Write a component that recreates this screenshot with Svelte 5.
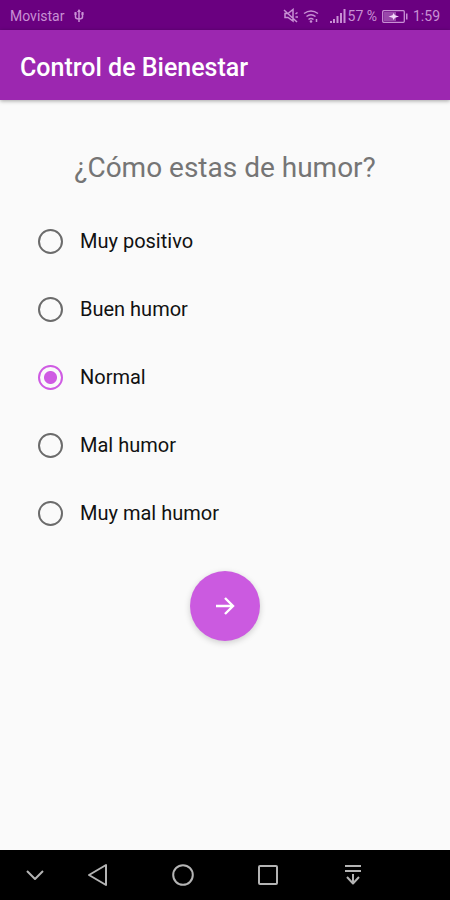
<script>
  const opciones = [
    { id: 'muy-positivo', texto: 'Muy positivo' },
    { id: 'buen-humor', texto: 'Buen humor' },
    { id: 'normal', texto: 'Normal' },
    { id: 'mal-humor', texto: 'Mal humor' },
    { id: 'muy-mal-humor', texto: 'Muy mal humor' },
  ];

  let humor = $state('normal');
</script>

<div class="screen">
  <div class="status">
    <span>Movistar</span>
    <svg class="usb" width="10" height="14" viewBox="0 0 10 14" fill="none" stroke="currentColor">
      <path d="M5 1v12M1.5 4v4q0 2 3.500 2M8.500 4v4q0 2-3.500 2" stroke-width="1.5" />
      <path d="M5 0l2 3H3zM0.500 3h2v3h-2zM7.500 3h2v3h-2z" fill="currentColor" stroke="none" />
    </svg>
    <svg class="mute" width="16" height="16" viewBox="0 0 16 16" fill="none" stroke="currentColor" stroke-width="1.5">
      <path d="M2 5.5h3l5-4v11.500l-5-3.500H2zM1 2l13 12M12.500 6l2-1.500M12.500 9h2.500" />
    </svg>
    <svg class="wifi" width="16" height="16" viewBox="0 0 16 16" fill="none" stroke="currentColor" stroke-width="1.5">
      <path d="M1 5.500q7-5 14 0M3.500 8.500q4.500-3.500 9 0M5.500 11.500q2.500-2 5 0" />
      <circle cx="8" cy="13.5" r="1.3" fill="currentColor" stroke="none" />
      <path d="M13.500 11v3" />
    </svg>
    <svg width="16" height="14" viewBox="0 0 16 14" fill="currentColor">
      <path d="M0 12h2v2H0zM3 10h2v4H3zM6.500 7h2v7h-2zM10 4h2v10h-2zM13.500 0h2v14h-2z" />
    </svg>
    <span class="percent">57 %</span>
    <svg class="battery" width="26" height="13" viewBox="0 0 26 13">
      <rect x="0.7" y="0.7" width="21.6" height="11.6" rx="1" fill="none" stroke="currentColor" stroke-width="1.3" />
      <path d="M2 2h12v9H2z" fill="currentColor" opacity="0.5" />
      <path d="M24 3.500h1.500v6H24z" fill="currentColor" />
      <path d="M6.500 6.500l4-1.200 1-2.300 1.500 2.300 4 1.200-4 1.200-1.500 2.300-1-2.300z" fill="#f3d9fa" />
    </svg>
    <span>1:59</span>
  </div>

  <header class="appbar">
    <h1>Control de Bienestar</h1>
  </header>

  <main>
    <h2 id="pregunta">¿Cómo estas de humor?</h2>

    <div class="options" role="radiogroup" aria-labelledby="pregunta">
      {#each opciones as o (o.id)}
        <label class="option">
          <input type="radio" name="humor" value={o.id} bind:group={humor} />
          <span>{o.texto}</span>
        </label>
      {/each}
    </div>

    <button class="next" type="button" aria-label="Siguiente">
      <svg width="20" height="20" viewBox="0 0 20 20" fill="none" stroke="currentColor" stroke-width="2.4">
        <path d="M1 10h17M10 2l8 8-8 8" />
      </svg>
    </button>
  </main>

  <nav class="navbar">
    <button type="button" aria-label="Ocultar">
      <svg width="24" height="24" viewBox="0 0 24 24"><path d="M4 8l8 8 8-8" /></svg>
    </button>
    <button type="button" aria-label="Atrás">
      <svg width="24" height="24" viewBox="0 0 24 24"><path d="M20 2v20L3 12z" /></svg>
    </button>
    <button type="button" aria-label="Inicio">
      <svg width="24" height="24" viewBox="0 0 24 24"><circle cx="12" cy="12" r="9.8" /></svg>
    </button>
    <button type="button" aria-label="Recientes">
      <svg width="24" height="24" viewBox="0 0 24 24"><rect x="3" y="3" width="18" height="18" rx="1" /></svg>
    </button>
    <button type="button" aria-label="Notificaciones">
      <svg width="24" height="24" viewBox="0 0 24 24"><path d="M4 3h16M4 8h16M12 11v10M6 14l6 6.500 6-6.500" /></svg>
    </button>
  </nav>
</div>

<style>
  :global(body) { margin: 0; background: #fafafa; }

  .screen {
    display: flex;
    flex-direction: column;
    min-height: 100vh;
    background: #fafafa;
    color: #111;
    font-family: Roboto, "Liberation Sans", sans-serif;
  }

  .status {
    display: flex;
    align-items: center;
    height: 30px;
    padding: 2px 10px 0;
    box-sizing: border-box;
    background: #6a0080;
    color: #c890d4;
    font-size: 14px;
  }
  .usb { margin-left: 10px; }
  .mute { margin-left: auto; }
  .wifi { margin: 0 11px 0 4px; }
  .percent { margin: 0 5px 0 2px; }
  .battery { margin-right: 5px; }

  .appbar {
    display: flex;
    align-items: center;
    height: 70px;
    padding: 4px 20px 0;
    box-sizing: border-box;
    background: #9c27b0;
    color: #fff;
    box-shadow: 0 1px 4px rgba(0, 0, 0, 0.35);
  }
  h1 { margin: 0; font-size: 25px; font-weight: 500; }

  main {
    flex: 1;
    display: flex;
    flex-direction: column;
    align-items: center;
    padding: 48px 38px 24px;
  }
  h2 { margin: 0 0 19px; font-size: 28px; line-height: 40px; font-weight: 400; color: #757575; text-align: center; }

  .options { align-self: stretch; }
  .option { display: flex; align-items: center; gap: 17px; height: 68px; font-size: 20px; cursor: pointer; }
  input {
    appearance: none;
    width: 25px;
    height: 25px;
    margin: 0;
    border: 2px solid #6b6b6b;
    border-radius: 50%;
  }
  input:checked {
    border-color: #cf5be3;
    background: radial-gradient(circle, #cf5be3 6px, transparent 7px);
  }

  button { display: grid; place-items: center; padding: 0; border: 0; cursor: pointer; }
  .next {
    width: 70px;
    height: 70px;
    margin-top: 24px;
    border-radius: 50%;
    background: #cb5ae0;
    color: #fff;
    box-shadow: 0 2px 6px rgba(0, 0, 0, 0.18);
  }

  .navbar {
    display: grid;
    grid-template-columns: 41px repeat(4, 1fr);
    height: 50px;
    padding: 0 55px 0 14px;
    background: #000;
  }
  .navbar button { background: none; color: #b4b4b4; }
  .navbar svg { fill: none; stroke: currentColor; stroke-width: 2; stroke-linejoin: round; }
</style>
